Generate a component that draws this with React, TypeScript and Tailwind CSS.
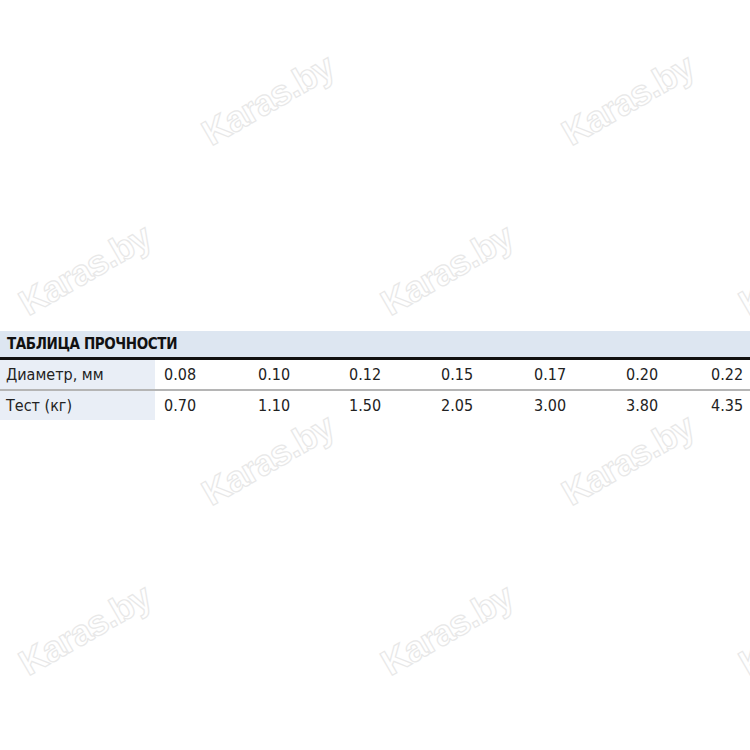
const diam = ['0.08', '0.10', '0.12', '0.15', '0.17', '0.20', '0.22'];
const test = ['0.70', '1.10', '1.50', '2.05', '3.00', '3.80', '4.35'];

// watermark centers
const marks = [
  [268, 100], [628, 100],
  [85, 270], [447, 270], [805, 270],
  [268, 460], [628, 460],
  [85, 630], [447, 630], [805, 630],
];

const narrow = "font-['Liberation_Sans_Narrow','DejaVu_Sans_Condensed','Liberation_Sans',sans-serif]";

function Row({ label, values, border }: { label: string; values: string[]; border?: boolean }) {
  return (
    <div
      className={`grid grid-cols-[155px_94px_91px_92px_93px_92px_85px_1fr] text-[16px] text-[#222] ${
        border ? 'border-b-2 border-[#b5b5b5]' : ''
      }`}
    >
      <div className="bg-[#e9eef6] pl-[6px] h-[29px] flex items-center">{label}</div>
      {values.map((v) => (
        <div key={v} className="pl-[9px] h-[29px] flex items-center">
          {v}
        </div>
      ))}
      <div />
    </div>
  );
}

export default function App() {
  return (
    <main className={`relative w-[750px] h-[750px] bg-white overflow-hidden ${narrow}`}>
      {marks.map(([x, y], i) => (
        <div
          key={i}
          className="absolute -translate-x-1/2 -translate-y-1/2 -rotate-[30deg] font-['Liberation_Sans',sans-serif] font-bold text-[36px] text-white [-webkit-text-stroke:1.2px_#e8e8e8] tracking-tight select-none"
          style={{ left: x, top: y }}
        >
          Karas.by
        </div>
      ))}

      <div className="relative pt-[331px]">
        <div className="bg-[#dde6f1] h-[29px] flex items-center pl-[7px] border-b-[3px] border-[#111]">
          <span className="font-bold text-[15px] text-[#111] tracking-[-0.4px]">ТАБЛИЦА ПРОЧНОСТИ</span>
        </div>
        <Row label="Диаметр, мм" values={diam} border />
        <Row label="Тест (кг)" values={test} />
      </div>
    </main>
  );
}
